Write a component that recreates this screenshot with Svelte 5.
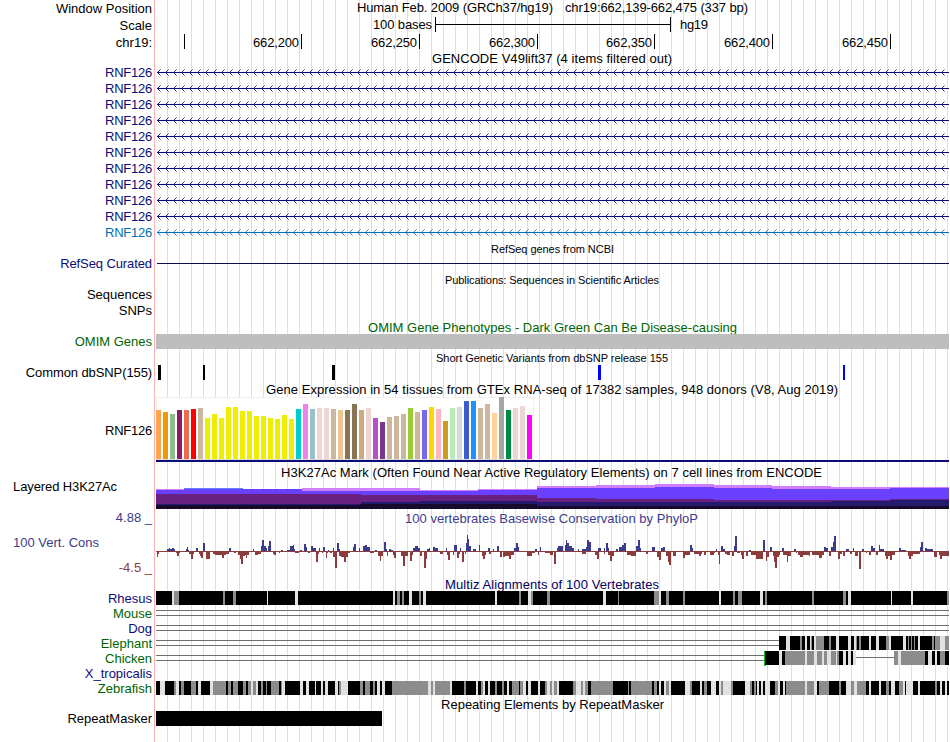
<script>
  const left = 156;
  const width = 793;

  const ruler = [
    { x: 184, label: '' },
    { x: 301, label: '662,200' },
    { x: 419, label: '662,250' },
    { x: 537, label: '662,300' },
    { x: 654, label: '662,350' },
    { x: 772, label: '662,400' },
    { x: 890, label: '662,450' }
  ];

  const genes = Array.from({ length: 11 }, (_, i) => ({ name: 'RNF126', alt: i === 10 }));

  let chevrons = '';
  for (let x = 157; x < 947; x += 8) {
    chevrons += `M${x + 3.5} 4.5L${x + 0.5} 7.5L${x + 3.5} 10.5`;
  }

  const snps = [
    { x: 158, w: 3, color: '#000' },
    { x: 203, w: 2, color: '#000' },
    { x: 332, w: 3, color: '#000' },
    { x: 598, w: 3, color: '#00f' },
    { x: 843, w: 2, color: '#00f' }
  ];

  // [color, bar height] per tissue
  const tissues = [
    ['#ffa54f', 49], ['#ee9a00', 47], ['#8fbc8f', 45], ['#8b1c62', 49], ['#ee6a50', 49], ['#ff0000', 50],
    ['#cdb79e', 51], ['#eeee00', 41], ['#eeee00', 45], ['#eeee00', 41], ['#eeee00', 52], ['#eeee00', 52],
    ['#eeee00', 48], ['#eeee00', 48], ['#eeee00', 43], ['#eeee00', 43], ['#eeee00', 41], ['#eeee00', 40],
    ['#eeee00', 44], ['#eeee00', 40], ['#00cdcd', 50], ['#ee82ee', 55], ['#9ac0cd', 50], ['#eed5d2', 51],
    ['#eed5d2', 51], ['#cdb79e', 50], ['#eec591', 49], ['#8b7355', 49], ['#8b7355', 55], ['#cdaa7d', 49],
    ['#eed5d2', 51], ['#b452cd', 41], ['#7a378b', 37], ['#cdb79e', 42], ['#cdb79e', 43], ['#cdb79e', 45],
    ['#9acd32', 51], ['#cdb79e', 47], ['#7a67ee', 49], ['#ffd700', 52], ['#ffb6c1', 50], ['#cd9b1d', 38],
    ['#b4eeb4', 51], ['#d9d9d9', 52], ['#3a5fcd', 58], ['#1e90ff', 58], ['#cdb79e', 51], ['#cdb79e', 55],
    ['#ffd39b', 46], ['#a6a6a6', 62], ['#008b45', 49], ['#eed5d2', 51], ['#eed5d2', 53], ['#ff00ff', 44]
  ];

  // x, then the top of each layer: pink, violet, purple, navy, dark
  const layerColors = ['#d080ff', '#6a40ff', '#6a2080', '#241a70', '#180a2c'];
  const layers = [
    [156, 10, 11, 15, 25, 26],
    [184, 10, 10, 15, 25, 26],
    [243, 10, 10, 15, 25, 26],
    [302, 9, 12, 15, 25, 26],
    [361, 9, 12, 16, 23, 25],
    [420, 11, 12, 16, 22, 25],
    [478, 10, 11, 16, 22, 25],
    [537, 7, 9, 19, 23, 27],
    [596, 6, 9, 20, 23, 27],
    [655, 5, 8, 20, 23, 27],
    [714, 6, 9, 21, 23, 27],
    [772, 7, 10, 21, 23, 27],
    [831, 8, 10, 21, 22, 27],
    [890, 8, 9, 20, 21, 27]
  ];

  // Scores are "from-to:height", positions in thirds of a pixel from the block start
  const conservation = [
    {
      start: 150,
      up: '52-57:2 57-61:3 61-66:2 66-71:3 71-75:2 108-111:2 111-114:4 114-117:1 138-144:3 159-165:8 237-242:3 309-312:2 333-337:5 337-342:11 342-347:5 347-350:3 354-358:5 358-363:10 393-398:1 411-420:1 420-425:5 425-429:5 429-433:6 433-436:2 450-455:1 462-467:7 467-470:4 484-490:5 490-498:3 507-511:3 519-525:4 534-538:1 549-552:3 561-566:8 566-570:2 609-613:4 613-618:7 626-629:3 638-642:5 642-646:5 646-652:6 652-660:4 675-681:1 702-708:9 708-711:2 717-723:2 723-729:1 790-794:3 794-798:5 798-803:5 803-810:3',
      down: '21-24:6 24-27:3 78-81:2 81-87:5 87-90:2 118-124:3 124-129:8 129-132:3 147-150:3 150-154:5 154-159:7 168-180:8 189-194:3 194-215:4 215-222:7 222-228:4 228-236:3 252-257:2 264-270:4 270-273:8 273-279:13 279-284:5 284-287:4 287-291:7 291-298:4 315-325:4 325-333:3 369-373:3 373-378:4 387-391:2 435-448:2 475-480:2 498-504:11 504-508:3 516-518:2 528-532:7 532-535:2 540-545:2 549-554:6 555-561:17 568-573:5 573-582:6 582-588:11 588-593:6 593-600:2 660-672:2 684-689:5 689-694:10 694-700:5 711-714:5 728-733:4 733-738:7 753-758:5 759-765:15 765-773:5 780-785:10 785-790:4'
    },
    {
      start: 415,
      up: '0-4:5 4-11:3 37-41:2 41-46:3 55-61:4 61-68:3 92-96:3 118-125:6 134-137:3 153-156:8 156-159:16 159-162:12 162-168:5 175-182:2 192-196:6 220-226:3 233-238:2 246-252:5 297-302:3 302-306:8 306-310:8 310-313:4 361-365:2 375-379:4 426-430:3 430-443:5 450-454:6 454-457:11 457-463:8 463-472:5 472-478:3 488-492:2 502-512:2 514-517:4 517-522:11 522-528:9 550-557:3 567-571:3 573-578:8 578-581:3 604-610:2 613-620:4 620-627:6 627-634:8 662-670:5 670-676:11 676-679:3 712-720:4 738-743:3 743-751:4',
      down: '14-20:5 27-33:17 33-36:8 75-84:3 96-99:4 99-104:9 113-118:4 126-132:7 132-136:3 141-146:11 150-153:3 202-205:5 205-210:8 210-214:4 222-228:3 255-262:6 265-270:6 270-283:5 283-288:8 288-296:4 335-352:5 352-360:2 368-373:4 390-405:2 405-414:4 416-422:13 500-512:3 540-545:4 545-552:8 566-569:3 580-585:4 585-590:10 590-596:5 636-642:4 642-648:4 648-663:5 692-699:3 726-732:6 732-739:9 753-758:5 758-762:11 762-768:14 775-782:5'
    },
    {
      start: 680,
      up: '30-36:6 36-39:3 108-112:2 123-129:5 129-134:2 162-165:5 165-171:15 207-212:1 249-254:11 270-276:4 306-311:3 342-348:2 432-438:4 438-444:3 453-459:4 459-462:9 462-468:15 498-508:2 518-522:3 546-551:2 573-579:5 579-586:3 597-601:6 601-613:2 657-662:3 662-677:1 720-724:4 724-729:9 735-740:3 740-758:2',
      down: '9-15:7 15-22:4 22-30:4 43-56:3 56-64:5 64-66:3 72-78:4 90-102:4 102-106:2 114-117:4 117-120:13 136-142:3 142-150:4 157-162:5 172-180:2 183-186:4 186-192:8 198-204:5 213-228:4 228-248:8 257-261:10 261-266:6 278-283:5 283-286:11 286-291:17 291-297:6 297-300:4 310-320:4 320-325:11 325-333:5 348-352:2 354-360:4 360-369:6 369-386:4 386-390:5 397-418:4 418-425:7 425-432:4 446-452:5 475-481:8 481-486:3 489-495:5 510-516:3 526-533:5 538-544:18 558-562:2 567-573:4 588-594:4 615-618:5 618-623:8 623-629:5 629-636:9 636-645:4 684-687:5 687-693:8 693-700:5 700-720:3 762-770:6 777-780:4 780-787:8 787-800:5 800-807:5'
    }
  ];

  function parseScores(text, start) {
    return text.split(' ').map((item) => {
      const [range, h] = item.split(':');
      const [from, to] = range.split('-').map((n) => Math.round(start + n / 3));
      return { x: from, w: Math.max(1, to - from), h: Number(h) };
    });
  }

  const gains = conservation.flatMap((block) => parseScores(block.up, block.start));
  const losses = conservation.flatMap((block) => parseScores(block.down, block.start));

  // b = identical, g = partial, l = weak; same units as above
  const shades = { b: '#000', g: '#8c8c8c', l: '#e1e1e1' };

  function parseBlocks(text, start) {
    return text.split(' ').map((item) => {
      const [from, to] = item.slice(1).split('-').map((n) => Math.round(start + n / 3));
      return { x: from, w: to - from, fill: shades[item[0]] };
    });
  }

  const species = [
    {
      name: 'Rhesus', color: 'navy', gapEnd: 0,
      blocks: [
        ...parseBlocks('b18-1200 l66-72 g72-87 g219-225 g249-258 l351-354 l435-444 l729-735 g741-750 g756-762 l777-786 g807-813 l819-828 l1035-1041 g1107-1113 l1134-1143 g1143-1149 g1191-1200', 150),
        ...parseBlocks('b0-1197 l159-168 g204-207 g312-327 l327-333 g348-357 g399-405 l507-513 g549-555 g564-576 l630-639 g645-651 g786-792 g879-888 l894-903 l1023-1026 l1083-1089 g1191-1197', 550)
      ]
    },
    { name: 'Mouse', color: 'green', gapEnd: 949, blocks: [] },
    { name: 'Dog', color: 'navy', gapEnd: 949, blocks: [] },
    {
      name: 'Elephant', color: 'green', gapEnd: 779,
      blocks: parseBlocks('b687-1197 l708-720 g750-756 l765-771 l780-783 g783-786 l792-798 g798-822 g837-843 l858-867 l894-903 l912-918 g918-921 g927-933 l957-963 l978-987 g1008-1017 l1017-1023 l1059-1068 g1074-1077 g1083-1086 g1092-1095 l1104-1110 g1146-1152 g1155-1170 l1170-1185 g1185-1197', 550)
    },
    {
      name: 'Chicken', color: 'green', gapEnd: 764,
      blocks: parseBlocks('b645-687 l687-696 b696-705 g705-765 l765-771 g771-792 l792-801 g801-816 l816-822 g822-831 l831-843 g843-858 l858-861 g861-867 b867-879 l879-888 b888-894 l894-903 b903-909 l909-918 g1032-1044 l1044-1053 g1053-1125 b1125-1134 l1134-1146 b1146-1155 l1155-1161 b1161-1170 g1170-1185 b1185-1197', 550)
    },
    { name: 'X_tropicalis', color: 'navy', gapEnd: 0, blocks: [] },
    {
      name: 'Zebrafish', color: 'green', gapEnd: 0,
      blocks: [
        ...parseBlocks('b18-1200 l30-45 g72-78 l78-87 g93-102 g123-138 l144-153 l180-189 g189-228 g234-243 g249-264 g279-288 g294-303 l303-309 g309-318 l318-324 g333-339 g348-351 g363-387 g393-396 l396-405 l450-459 l468-477 l495-498 l513-519 l525-534 l555-564 g567-573 l573-594 g630-639 g645-660 g669-675 l681-690 l696-705 g726-834 l834-843 g843-849 l849-855 g855-900 l900-906 g942-948 l978-984 g993-999 l999-1005 l1014-1020 g1035-1041 g1056-1062 l1071-1077 g1086-1107 g1110-1119 l1119-1128 l1134-1143 l1164-1170 g1185-1191 l1191-1200', 150),
        ...parseBlocks('b0-1197 g0-6 l6-12 g12-21 l21-27 g69-78 l78-93 g93-99 l99-105 g105-114 g123-189 g234-237 g243-306 g312-321 l327-333 l342-348 g348-357 l357-363 l405-420 g420-426 l450-456 g462-471 l483-498 l507-513 g513-519 l519-543 g543-549 l585-600 g600-606 g612-618 l621-627 l633-639 l645-660 g675-684 l684-690 l699-705 g708-765 l765-771 g771-792 l792-801 g807-837 g867-873 l888-903 g903-912 l912-921 g921-948 l957-963 l987-993 g1008-1017 l1023-1035 g1047-1059 l1059-1065 l1068-1089 l1104-1110 g1155-1161 l1170-1176 l1185-1191', 550)
      ]
    }
  ];
</script>

{#snippet title(text, x, w, y, h, kind = '')}
  <div class="row title">
    <svg width={width} height={h} viewBox="{left} 0 {width} {h}">
      <text class={kind} {x} {y} textLength={w}>{text}</text>
    </svg>
  </div>
{/snippet}

<main class="browser">
  <div class="row">
    <span class="label tall">Window Position</span>
    <svg width={width} height="17" viewBox="{left} 0 {width} 17">
      <text x="357" y="12" textLength="196">Human Feb. 2009 (GRCh37/hg19)</text>
      <text x="565" y="12" textLength="183">chr19:662,139-662,475 (337 bp)</text>
    </svg>
  </div>
  <div class="row">
    <span class="label tall">Scale</span>
    <svg width={width} height="17" viewBox="{left} 0 {width} 17">
      <text x="373" y="12" textLength="59">100 bases</text>
      <path d="M435 7h236v1h-236zM435 0h1v15h-1zM670 0h1v15h-1z" />
      <text x="680" y="12" textLength="28">hg19</text>
    </svg>
  </div>
  <div class="row">
    <span class="label tall">chr19:</span>
    <svg width={width} height="17" viewBox="{left} 0 {width} 17">
      {#each ruler as tick}
        <rect x={tick.x} y="0" width="1" height="15" />
        {#if tick.label}
          <text x={tick.x - 48} y="13" textLength="46">{tick.label}</text>
        {/if}
      {/each}
    </svg>
  </div>

  {@render title('GENCODE V49lift37 (4 items filtered out)', 432, 240, 12, 14)}
  {#each genes as gene}
    <div class="row gene" class:alt={gene.alt}>
      <span class="label tight">{gene.name}</span>
      <svg width={width} height="16" viewBox="{left} 0 {width} 16">
        <rect x="157" y="7" width="792" height="1" />
        <path class="chevrons" d={chevrons} />
      </svg>
    </div>
  {/each}

  {@render title('RefSeq genes from NCBI', 491, 123, 12, 15, 'small')}
  <div class="row">
    <span class="label snug navy">RefSeq Curated</span>
    <svg width={width} height="16" viewBox="{left} 0 {width} 16">
      <rect x="157" y="7" width="792" height="1" fill="#0c0c50" />
    </svg>
  </div>

  {@render title('Publications: Sequences in Scientific Articles', 445, 214, 12, 15, 'small')}
  <div class="row empty"><span class="label">Sequences</span></div>
  <div class="row empty"><span class="label">SNPs</span></div>

  {@render title('OMIM Gene Phenotypes - Dark Green Can Be Disease-causing', 368, 369, 13, 15, 'green')}
  <div class="row">
    <span class="label green">OMIM Genes</span>
    <svg width={width} height="16" viewBox="{left} 0 {width} 16">
      <rect x="156" y="0" width="793" height="15" fill="#bebebe" />
    </svg>
  </div>

  {@render title('Short Genetic Variants from dbSNP release 155', 436, 232, 12, 15, 'small')}
  <div class="row">
    <span class="label snug">Common dbSNP(155)</span>
    <svg width={width} height="16" viewBox="{left} 0 {width} 16">
      {#each snps as snp}
        <rect x={snp.x} y="0" width={snp.w} height="15" fill={snp.color} />
      {/each}
    </svg>
  </div>

  {@render title('Gene Expression in 54 tissues from GTEx RNA-seq of 17382 samples, 948 donors (V8, Aug 2019)', 266, 572, 13, 16)}
  <div class="row middle">
    <span class="label tight">RNF126</span>
    <svg width={width} height="66" viewBox="{left} 0 {width} 66">
      <rect x="156" y="0" width="378" height="63" fill="#f0f0f0" />
      <rect x="157" y="1" width="376" height="61" fill="#fff" />
      {#each tissues as [color, h], i}
        <rect x={left + i * 7} y={62 - h} width="5" height={h} fill={color} />
      {/each}
      <rect x="156" y="62" width="378" height="1" fill="#dcdcdc" />
      <rect x="156" y="63" width="793" height="2" fill="#0c0c78" />
    </svg>
  </div>

  {@render title('H3K27Ac Mark (Often Found Near Active Regulatory Elements) on 7 cell lines from ENCODE', 281, 541, 14, 16)}
  <div class="row">
    <span class="label side snug">Layered H3K27Ac</span>
    <svg width={width} height="31" viewBox="{left} 0 {width} 31">
      {#each layers as [x, ...tops], i}
        {#each tops as top, k}
          <rect {x} y={top} width={(layers[i + 1]?.[0] ?? 949) - x} height={30 - top} fill={layerColors[k]} />
        {/each}
      {/each}
      <rect x="184" y="9" width="59" height="1" fill="#6080ff" />
    </svg>
  </div>

  <div class="row">
    <span class="label upper phylo">4.88 _</span>
    <svg width={width} height="16" viewBox="{left} 0 {width} 16">
      <text class="phylo" x="405" y="13" textLength="293">100 vertebrates Basewise Conservation by PhyloP</text>
    </svg>
  </div>
  <div class="row">
    <div class="scores">
      <span class="label side phylo">100 Vert. Cons</span>
      <span class="label loss">-4.5 _</span>
    </div>
    <svg width={width} height="48" viewBox="{left} 0 {width} 48">
      <rect x="156" y="25" width="793" height="1" fill="#8c3c3c" />
      {#each gains as bar}
        <rect x={bar.x} y={25 - bar.h} width={bar.w} height={bar.h} fill="#3c3c8c" />
      {/each}
      {#each losses as bar}
        <rect x={bar.x} y="25" width={bar.w} height={bar.h} fill="#8c3c3c" />
      {/each}
    </svg>
  </div>

  {@render title('Multiz Alignments of 100 Vertebrates', 445, 214, 15, 17, 'navy')}
  {#each species as row}
    <div class="row">
      <span class="label {row.color}">{row.name}</span>
      <svg width={width} height="15" viewBox="{left} 0 {width} 15">
        {#if row.gapEnd}
          <path class="gap" d="M156 4H{row.gapEnd}v1H156zM156 9H{row.gapEnd}v1H156z" />
        {/if}
        {#if row.name === 'Chicken'}
          <rect class="gap" x="856" y="6" width="38" height="1" />
          <rect x="764" y="0" width="2" height="15" fill="#00c81e" />
        {/if}
        {#each row.blocks as block}
          <rect x={block.x} y="0" width={block.w} height="14" fill={block.fill} />
        {/each}
      </svg>
    </div>
  {/each}

  {@render title('Repeating Elements by RepeatMasker', 441, 223, 13, 15)}
  <div class="row">
    <span class="label">RepeatMasker</span>
    <svg width={width} height="16" viewBox="{left} 0 {width} 16">
      <rect x="156" y="0" width="226" height="15" />
    </svg>
  </div>
</main>

<style>
  :global(body) {
    background: #fff;
  }

  .browser {
    width: 949px;
    height: 742px;
    overflow: hidden;
    box-sizing: border-box;
    font-family: 'Liberation Sans', Arial, sans-serif;
    font-size: 13px;
    color: #000;
    background:
      linear-gradient(#ffb4b4, #ffb4b4) 154px 0 / 1px 100% no-repeat,
      repeating-linear-gradient(90deg, #dcdcfa 0, #dcdcfa 1px, transparent 1px, transparent 12px) 167px 0 / 782px 100% no-repeat;
  }

  .row {
    display: grid;
    grid-template-columns: 152px 793px;
    column-gap: 4px;
  }

  .title {
    grid-template-columns: 793px;
    justify-content: end;
  }

  .label {
    line-height: 15px;
    height: 15px;
    text-align: right;
    white-space: nowrap;
  }

  .label.tall {
    line-height: 17px;
    height: 17px;
  }

  .label.upper {
    line-height: 16px;
    height: 16px;
    padding-top: 0;
  }

  .label.side {
    text-align: left;
    padding-left: 13px;
  }

  .label.tight {
    letter-spacing: -0.25px;
  }

  .label.snug {
    letter-spacing: -0.1px;
  }

  .empty {
    height: 16px;
  }

  .middle {
    align-items: center;
  }

  .gene {
    color: #0c0c78;
    fill: #0c0c78;
    stroke: #0c0c78;
  }

  .gene.alt {
    color: #006eb4;
    fill: #006eb4;
    stroke: #006eb4;
  }

  .gene rect {
    stroke: none;
  }

  .chevrons {
    fill: none;
    stroke-width: 1;
    stroke-opacity: 0.85;
    shape-rendering: auto;
  }

  .scores {
    display: flex;
    flex-direction: column;
    justify-content: space-between;
    box-sizing: border-box;
    height: 49px;
    margin-bottom: -1px;
    padding-top: 9px;
  }

  svg {
    display: block;
    overflow: visible;
    shape-rendering: crispEdges;
  }

  text {
    white-space: pre;
  }

  .small {
    font-size: 11px;
  }

  .navy {
    color: #0c0c78;
    fill: #000064;
  }

  .green {
    color: #006400;
    fill: #006400;
  }

  .phylo {
    color: #3c3c8c;
    fill: #3c3c8c;
  }

  .loss {
    color: #8c3c3c;
  }

  .gap {
    fill: #6e6e6e;
  }
</style>
